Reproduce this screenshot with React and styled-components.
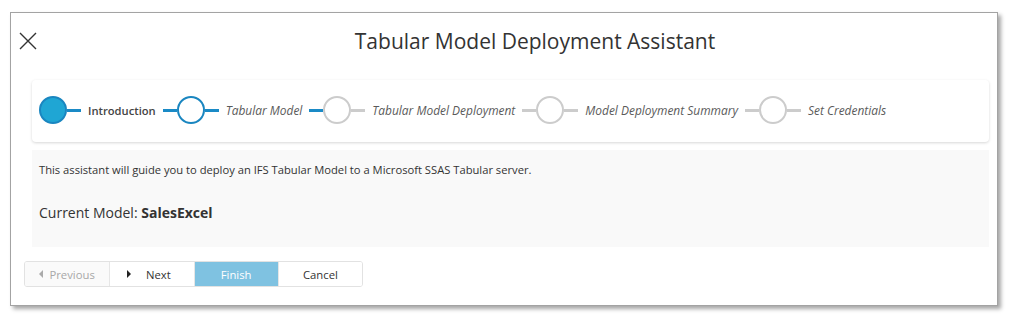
import styled, {createGlobalStyle} from 'styled-components';

const GlobalStyle = createGlobalStyle`
  body {
    margin: 0;
    background: #ffffff;
    font-family: "Open Sans", "Noto Sans", sans-serif;
  }
`;

const steps = [
  {label: 'Introduction', state: 'done'},
  {label: 'Tabular Model', state: 'current'},
  {label: 'Tabular Model Deployment', state: 'todo'},
  {label: 'Model Deployment Summary', state: 'todo'},
  {label: 'Set Credentials', state: 'todo'},
];

const App = () => {
  return (
    <>
      <GlobalStyle />
      <Page>
        <Dialog>
          <Header>
            <CloseButton aria-label='close'>
              <svg width='18' height='18' viewBox='0 0 18 18'>
                <path d='M1 1 L17 17 M17 1 L1 17' stroke='#333' strokeWidth='1.4' fill='none' />
              </svg>
            </CloseButton>
            <Title>Tabular Model Deployment Assistant</Title>
          </Header>
          <Stepper>
            {steps.map((step, i) => {
              const prev = i > 0 ? steps[i - 1].state : null;
              const leadActive = prev === 'done' || prev === 'current';
              const trailActive = step.state !== 'todo';
              return (
                <Step key={step.label}>
                  {i > 0 && <Line $active={leadActive} />}
                  <Circle $state={step.state} />
                  <Line $active={trailActive} />
                  <StepLabel $state={step.state}>{step.label}</StepLabel>
                </Step>
              );
            })}
          </Stepper>
          <Content>
            <Intro>This assistant will guide you to deploy an IFS Tabular Model to a Microsoft SSAS Tabular server.</Intro>
            <ModelLine>Current Model: <strong>SalesExcel</strong></ModelLine>
          </Content>
          <ButtonGroup>
            <Button $variant='disabled'><Arrow $dir='left' $disabled />Previous</Button>
            <Button $padRight={6}><Arrow $dir='right' />Next</Button>
            <Button $variant='primary'>Finish</Button>
            <Button>Cancel</Button>
          </ButtonGroup>
        </Dialog>
      </Page>
    </>
  );
};

const Page = styled.div`
  padding: 12px 15px 14px 10px;
`;

const Dialog = styled.div`
  width: 988px;
  height: 294px;
  box-sizing: border-box;
  border: 1px solid #a3a3a3;
  background: #ffffff;
  box-shadow: 3px 3px 4px rgba(0, 0, 0, 0.35);
  padding: 0 8px 0 20px;
  display: flex;
  flex-direction: column;
`;

const Header = styled.div`
  display: flex;
  align-items: center;
  height: 55px;
`;

const CloseButton = styled.div`
  display: flex;
  margin-left: -12px;
  width: 18px;
  height: 18px;
`;

const Title = styled.h1`
  flex: 1;
  margin: 0;
  text-align: center;
  font-size: 21px;
  font-weight: 400;
  color: #333333;
  padding-left: 44px;
`;

const Stepper = styled.div`
  margin: 12px 0 0 1px;
  height: 62px;
  box-sizing: border-box;
  background: #ffffff;
  border-radius: 4px;
  box-shadow: 0 1px 3px rgba(0, 0, 0, 0.16);
  display: flex;
  align-items: center;
  padding-left: 7px;
  padding-bottom: 2px;
`;

const Step = styled.div`
  display: flex;
  align-items: center;
`;

const Line = styled.span`
  width: 14px;
  height: 3px;
  background: ${p => (p.$active ? '#1a8ac6' : '#cccccc')};
`;

const Circle = styled.span`
  width: 28px;
  height: 28px;
  box-sizing: border-box;
  border-radius: 50%;
  border: 2px solid ${p => (p.$state === 'todo' ? '#cccccc' : '#1a86c0')};
  background: ${p => (p.$state === 'done' ? '#1fa6d4' : '#ffffff')};
`;

const StepLabel = styled.span`
  margin: 0 7px;
  font-size: ${p => (p.$state === 'done' ? '11.2px' : '11.95px')};
  font-style: ${p => (p.$state === 'done' ? 'normal' : 'italic')};
  font-weight: ${p => (p.$state === 'done' ? 600 : 400)};
  color: ${p => (p.$state === 'done' ? '#444444' : '#5a5a5a')};
`;

const Content = styled.div`
  margin: 8px 0 0 1px;
  height: 97px;
  box-sizing: border-box;
  background: #f9f9f9;
  padding: 12px 7px;
  color: #333333;
`;

const Intro = styled.p`
  margin: 0;
  font-size: 11.2px;
`;

const ModelLine = styled.p`
  margin: 26px 0 0 0;
  font-size: 14px;

  strong {
    font-weight: 700;
  }
`;

const ButtonGroup = styled.div`
  display: flex;
  margin: 14px 0 0 -7px;
  width: 339px;
  height: 26px;
  border: 1px solid #e2e2e2;
  border-radius: 3px;
  box-sizing: border-box;
  overflow: hidden;
`;

const Button = styled.div`
  flex: 0 0 auto;
  width: 25%;
  box-sizing: border-box;
  display: flex;
  align-items: center;
  justify-content: center;
  gap: 6px;
  font-size: 11.3px;
  padding-right: ${p => p.$padRight || 0}px;
  border-left: 1px solid #e6e6e6;
  background: ${p => (p.$variant === 'primary' ? '#7fc2e1' : p.$variant === 'disabled' ? '#fafafa' : '#ffffff')};
  color: ${p => (p.$variant === 'primary' ? '#ffffff' : p.$variant === 'disabled' ? '#a8a8a8' : '#333333')};

  &:first-child {
    border-left: none;
  }
`;

const Arrow = styled.span`
  width: 0;
  height: 0;
  border-top: 4px solid transparent;
  border-bottom: 4px solid transparent;
  ${p => (p.$dir === 'left'
    ? `border-right: 4px solid ${p.$disabled ? '#aaaaaa' : '#222'};`
    : `border-left: 4px solid #222; margin-right: 9px;`)}
`;

export default App;
